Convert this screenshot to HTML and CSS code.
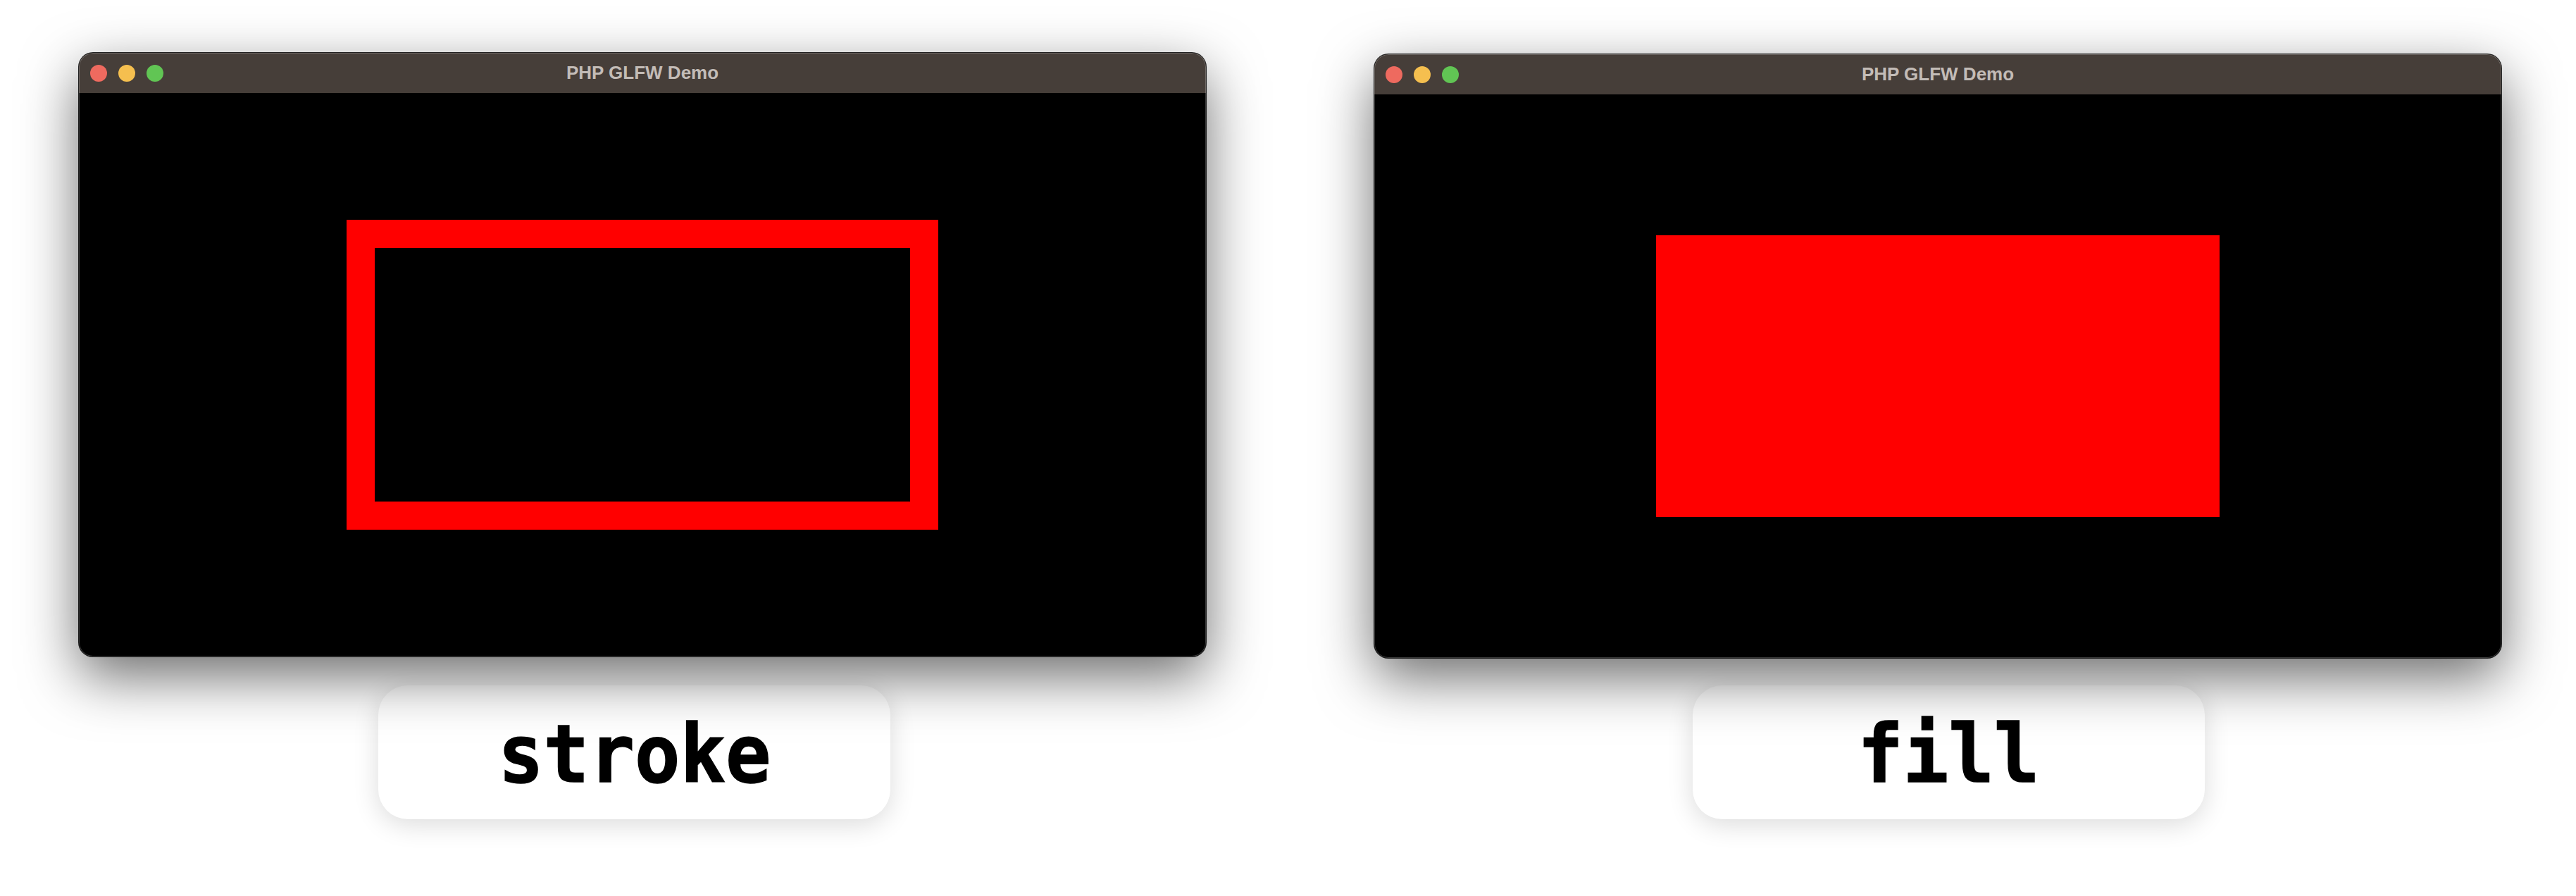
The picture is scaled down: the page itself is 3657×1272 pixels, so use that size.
FILE: index.html
```html
<!DOCTYPE html>
<html>
<head>
<meta charset="utf-8">
<link rel="stylesheet" href="styles.css">
</head>
<body>
<div class="stage">
  <div class="panel">
    <div class="window">
      <div class="titlebar">
        <div class="lights"><span class="light red"></span><span class="light yellow"></span><span class="light green"></span></div>
        <div class="title">PHP GLFW Demo</div>
        <div></div>
      </div>
      <div class="canvas"><div class="shape-stroke"></div></div>
    </div>
    <div class="label label--left"><span class="label-text">stroke</span></div>
  </div>
  <div class="panel panel--right">
    <div class="window">
      <div class="titlebar">
        <div class="lights"><span class="light red"></span><span class="light yellow"></span><span class="light green"></span></div>
        <div class="title">PHP GLFW Demo</div>
        <div></div>
      </div>
      <div class="canvas"><div class="shape-fill"></div></div>
    </div>
    <div class="label label--right"><span class="label-text">fill</span></div>
  </div>
</div>
</body>
</html>
```
FILE: styles.css
```css
html, body {
  margin: 0;
  background: #ffffff;
  width: 3657px;
  height: 1272px;
  overflow: hidden;
}
.stage {
  display: flex;
  padding: 75px 0 0 112px;
  gap: 239px;
}
.panel {
  width: 1600px;
  display: flex;
  flex-direction: column;
}
.panel--right {
  padding-top: 2px;
}
.window {
  position: relative;
  width: 1600px;
  border-radius: 20px;
  overflow: hidden;
  background: #000;
  box-shadow: 0 0 0 1px rgba(0,0,0,0.85), 0 28px 80px rgba(0,0,0,0.58);
}
.window::after {
  content: "";
  position: absolute;
  inset: 0;
  border-radius: 20px;
  box-shadow: inset 0 0 0 1px rgba(255,255,255,0.22);
  pointer-events: none;
}
.titlebar {
  height: 57px;
  background: #463e39;
  display: grid;
  grid-template-columns: 1fr auto 1fr;
  align-items: center;
  padding: 0 16px;
}
.lights {
  display: flex;
  gap: 16px;
}
.light {
  width: 24px;
  height: 24px;
  border-radius: 50%;
}
.red { background: #ee6a5f; }
.yellow { background: #f5bf4f; }
.green { background: #61c554; }
.title {
  font-family: "Liberation Sans", Arial, sans-serif;
  font-weight: bold;
  font-size: 26px;
  color: #c3bcb7;
}
.canvas {
  height: 800px;
  display: flex;
  align-items: center;
  justify-content: center;
}
.shape-stroke {
  width: 840px;
  height: 440px;
  box-sizing: border-box;
  border: 40px solid #ff0000;
}
.shape-fill {
  width: 800px;
  height: 400px;
  background: #ff0000;
}
.label {
  width: 727px;
  height: 190px;
  box-sizing: border-box;
  padding-top: 5px;
  margin-top: 41px;
  background: #fff;
  border-radius: 42px;
  box-shadow: 0 8px 36px rgba(0,0,0,0.14);
  display: flex;
  align-items: center;
  justify-content: center;
}
.label--left { margin-left: 425px; }
.label--right { margin-left: 452px; margin-top: 39px; }
.label-text {
  display: inline-block;
  font-family: "DejaVu Sans Mono", monospace;
  font-weight: bold;
  font-size: 114px;
  line-height: 1;
  color: #000;
  transform: scaleX(0.94);
  -webkit-text-stroke: 1.5px #000;
}
```
